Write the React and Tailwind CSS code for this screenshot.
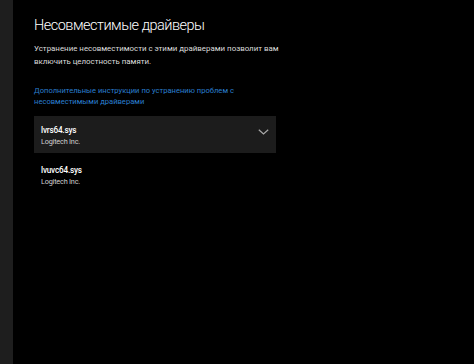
export default function App() {
  const drivers = [
    { name: 'lvrs64.sys', vendor: 'Logitech Inc.', open: true },
    { name: 'lvuvc64.sys', vendor: 'Logitech Inc.', open: false },
  ];

  return (
    <div className="w-[474px] h-[364px] bg-black flex overflow-hidden" style={{ fontFamily: 'Roboto, "Noto Sans", sans-serif' }}>
      {/* sidebar edge */}
      <div className="w-[13px] h-full bg-[#1e1e1e] shrink-0" />

      <div className="flex-1 pl-[21px] pt-[16px]">
        <h1 className="text-[14.5px] leading-[20px] font-light tracking-[-0.5px] text-white whitespace-nowrap">Несовместимые драйверы</h1>

        <p className="mt-[7px] text-[7.9px] leading-[12.5px] text-[#dcdcdc] whitespace-nowrap">
          Устранение несовместимости с этими драйверами позволит вам<br />включить целостность памяти.
        </p>

        <p className="mt-[18px] text-[7.6px] leading-[10.5px] text-[#2a7fd0] whitespace-nowrap">
          Дополнительные инструкции по устранению проблем с<br />несовместимыми драйверами
        </p>

        <div className="mt-[9px] w-[242px] flex flex-col gap-[3px]">
          {drivers.map((d) => (
            <div key={d.name} className={`h-[37px] pl-[7px] pr-[7px] pt-[9px] flex items-start justify-between ${d.open ? 'bg-[#1c1c1c]' : ''}`}>
              <div className="flex flex-col">
                <span className="text-[8.2px] leading-[11px] font-medium tracking-[-0.2px] text-white">{d.name}</span>
                <span className="text-[7.3px] leading-[11px] tracking-[-0.2px] text-[#cfcfcf]">{d.vendor}</span>
              </div>
              {d.open && (
                <svg width="11" height="6" viewBox="0 0 11 6" className="mt-[4px]">
                  <path d="M0.8 0.8 L5.5 5 L10.2 0.8" fill="none" stroke="#a8a8a8" strokeWidth="1.2" />
                </svg>
              )}
            </div>
          ))}
        </div>
      </div>
    </div>
  );
}
